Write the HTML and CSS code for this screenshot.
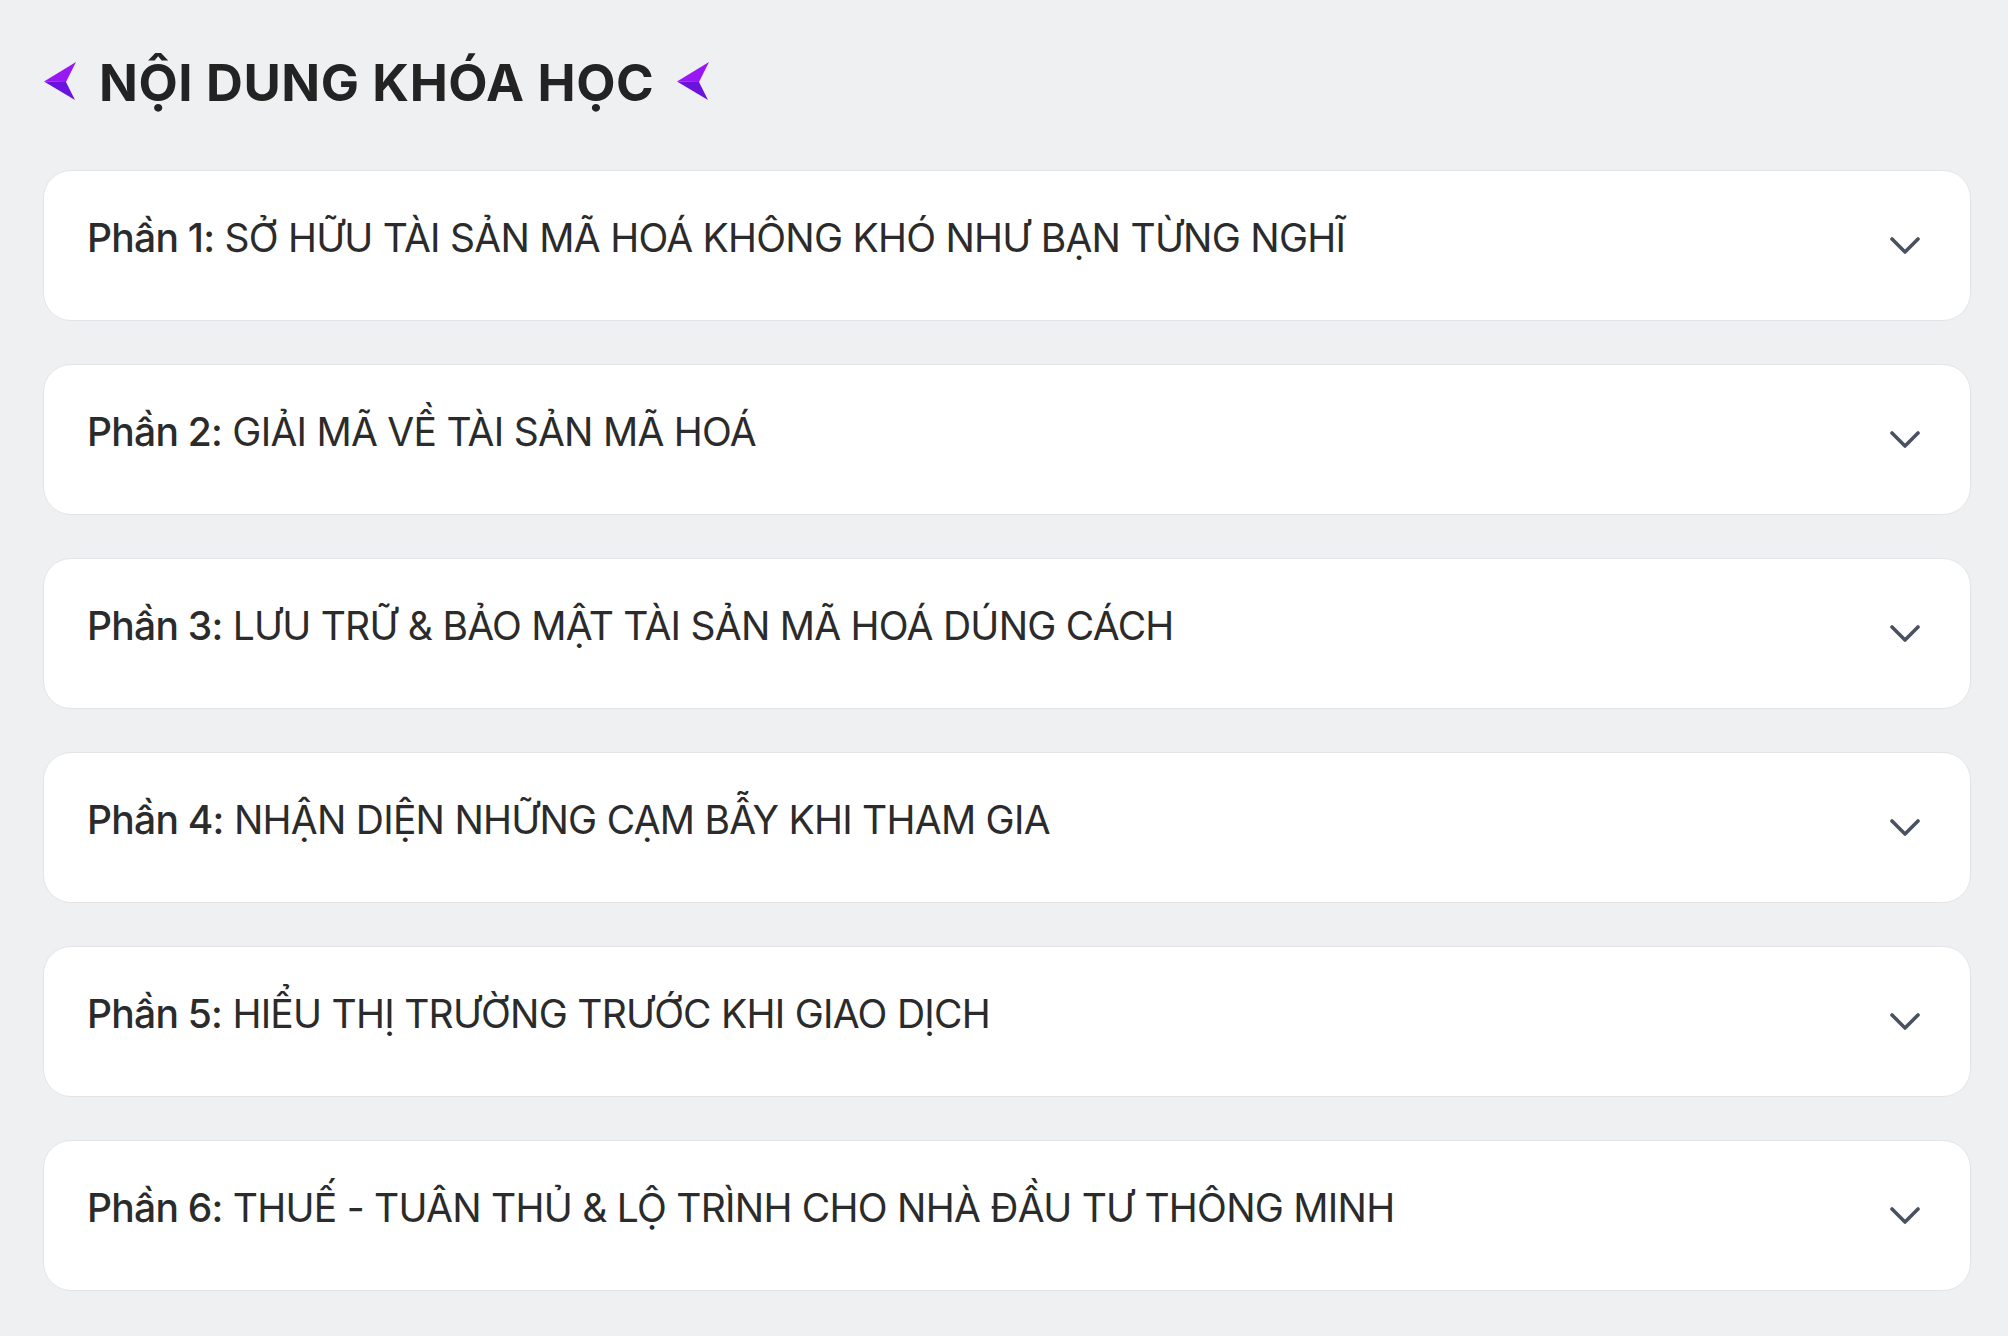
FILE: index.html
```html
<!DOCTYPE html>
<html lang="vi">
<head>
<meta charset="utf-8">
<title>Nội dung khóa học</title>
<link rel="stylesheet" href="styles.css">
</head>
<body>
<section class="course">
  <h2 class="course-title">
    <svg class="arrow" viewBox="0 0 34 40" width="34" height="40">
      <polygon points="1,19.5 33,0 23,20" fill="#9a17f5"/>
      <polygon points="1,19.5 23,20 32,38" fill="#6a12de"/>
    </svg>
    <span>NỘI DUNG KHÓA HỌC</span>
    <svg class="arrow" viewBox="0 0 34 40" width="34" height="40">
      <polygon points="1,19.5 33,0 23,20" fill="#9a17f5"/>
      <polygon points="1,19.5 23,20 32,38" fill="#6a12de"/>
    </svg>
  </h2>
  <div class="parts">
    <div class="part"><p class="part-name"><b>Phần 1:</b> SỞ HỮU TÀI SẢN MÃ HOÁ KHÔNG KHÓ NHƯ BẠN TỪNG NGHĨ</p><svg class="chev" viewBox="0 0 30 18" width="30" height="18"><polyline points="2,2 15,15 28,2" fill="none" stroke="#4a5160" stroke-width="3.6" stroke-linecap="round" stroke-linejoin="round"/></svg></div>
    <div class="part"><p class="part-name"><b>Phần 2:</b> GIẢI MÃ VỀ TÀI SẢN MÃ HOÁ</p><svg class="chev" viewBox="0 0 30 18" width="30" height="18"><polyline points="2,2 15,15 28,2" fill="none" stroke="#4a5160" stroke-width="3.6" stroke-linecap="round" stroke-linejoin="round"/></svg></div>
    <div class="part"><p class="part-name"><b>Phần 3:</b> LƯU TRỮ &amp; BẢO MẬT TÀI SẢN MÃ HOÁ DÚNG CÁCH</p><svg class="chev" viewBox="0 0 30 18" width="30" height="18"><polyline points="2,2 15,15 28,2" fill="none" stroke="#4a5160" stroke-width="3.6" stroke-linecap="round" stroke-linejoin="round"/></svg></div>
    <div class="part"><p class="part-name"><b>Phần 4:</b> NHẬN DIỆN NHỮNG CẠM BẪY KHI THAM GIA</p><svg class="chev" viewBox="0 0 30 18" width="30" height="18"><polyline points="2,2 15,15 28,2" fill="none" stroke="#4a5160" stroke-width="3.6" stroke-linecap="round" stroke-linejoin="round"/></svg></div>
    <div class="part"><p class="part-name"><b>Phần 5:</b> HIỂU THỊ TRƯỜNG TRƯỚC KHI GIAO DỊCH</p><svg class="chev" viewBox="0 0 30 18" width="30" height="18"><polyline points="2,2 15,15 28,2" fill="none" stroke="#4a5160" stroke-width="3.6" stroke-linecap="round" stroke-linejoin="round"/></svg></div>
    <div class="part"><p class="part-name"><b>Phần 6:</b> THUẾ - TUÂN THỦ &amp; LỘ TRÌNH CHO NHÀ ĐẦU TƯ THÔNG MINH</p><svg class="chev" viewBox="0 0 30 18" width="30" height="18"><polyline points="2,2 15,15 28,2" fill="none" stroke="#4a5160" stroke-width="3.6" stroke-linecap="round" stroke-linejoin="round"/></svg></div>
  </div>
</section>
</body>
</html>
```
FILE: styles.css
```css
html, body {
  margin: 0;
  padding: 0;
  background: #eff0f2;
}
body {
  font-family: Inter, "Noto Sans", sans-serif;
  color: #2a2a2a;
}
.course {
  padding: 53px 37px 40px 43px;
}
.course-title {
  margin: 0;
  display: flex;
  align-items: center;
  gap: 22px;
  font-size: 51px;
  line-height: 60px;
  font-weight: 700;
  color: #232323;
  letter-spacing: 0.6px;
}
.course-title .arrow {
  flex: none;
  margin-top: -2px;
}
.parts {
  margin-top: 57px;
  display: flex;
  flex-direction: column;
  gap: 43px;
}
.part {
  box-sizing: border-box;
  height: 151px;
  background: #ffffff;
  border: 1.5px solid #e2e4e8;
  border-radius: 28px;
  display: flex;
  align-items: center;
  justify-content: space-between;
  padding: 0 50px 0 43px;
}
.part-name {
  margin: 0 0 16px 0;
  font-size: 39px;
  line-height: 48px;
  font-weight: 400;
  color: #2b2b2b;
  letter-spacing: -0.75px;
}
.part-name b {
  font-weight: 500;
}
.chev {
  flex: none;
}
```
